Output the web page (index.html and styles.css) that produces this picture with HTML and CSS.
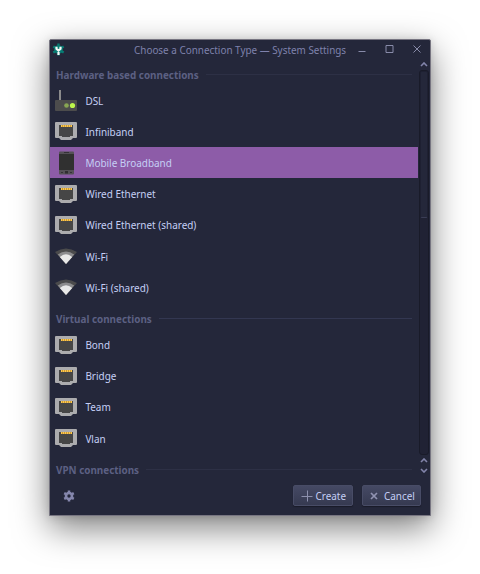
FILE: index.html
```html
<!DOCTYPE html>
<html lang="en">
<head>
<meta charset="utf-8">
<title>Choose a Connection Type — System Settings</title>
<link rel="stylesheet" href="styles.css">
</head>
<body>
<svg class="defs" aria-hidden="true">
  <symbol id="icon-port" viewBox="0 0 22 20">
    <path d="M1 1H21Q22 1 22 2V16Q22 17 21 17H18L16 19H6L4 17H1Q0 17 0 16V2Q0 1 1 1Z" fill="#acacae"/>
    <path d="M4 4H18V15H15V16H7V15H4Z" fill="#464646"/>
    <path d="M6 4H17V6H6Z" fill="#c99a3b"/>
    <path d="M6.500 4v2M8.500 4v2M10.500 4v2M12.500 4v2M14.500 4v2M16.500 4v2" stroke="#ffc94a"/>
  </symbol>
  <symbol id="icon-dsl" viewBox="0 0 22 22">
    <path d="M4 1h2v11H4z" fill="#8b8b8c"/>
    <rect y="11" width="22" height="11" rx="1" fill="#4c4c4c"/>
    <circle cx="11.5" cy="16.5" r="2.3" fill="#88a653"/>
    <circle cx="17.5" cy="16.5" r="2.6" fill="#bdf64b"/>
  </symbol>
  <symbol id="icon-phone" viewBox="0 0 22 24">
    <rect x="4" y="0.5" width="15" height="23" rx="1" fill="#555157"/>
    <path d="M4 3h15v16H4z" fill="#303030"/>
    <path d="M9 1.5h5M6 21.5h2M15 21.5h2" stroke="#343136"/>
    <rect x="10" y="20" width="3" height="2.5" fill="#302e31"/>
  </symbol>
  <symbol id="icon-wifi" viewBox="0 0 22 16">
    <path d="M0 4Q11-3 22 4L11 16z" fill="#4b4b4c"/>
    <path d="M2.8 6.5Q11 .3 19.2 6.5L11 16z" fill="#8c8c8e"/>
    <path d="M4.8 9Q11 3.5 17.2 9L11 16z" fill="#e9e9e9"/>
  </symbol>
</svg>
<main class="window">
  <header class="titlebar">
    <svg class="app-icon" viewBox="0 0 13 13">
      <circle cx="6.5" cy="6.5" r="4.3" fill="#087d74"/>
      <path d="M6.5.5v12M1.3 3.5l10.4 6M1.3 9.5l10.4-6" stroke="#087d74" stroke-width="2.4"/>
      <path d="M4.5 3.800v2l2 1.700 2-1.700V3.800M6.500 6.500V12" fill="none" stroke="#f7faf9" stroke-width="2.200"/>
    </svg>
    <h1 class="title">Choose a Connection Type — System Settings</h1>
    <svg class="controls" viewBox="0 0 64 12"><path d="M.5 8.5h7M28 2.5h7v7h-7zM55.500 2.500l7 7M62.500 2.500l-7 7" fill="none" stroke="#9496b5" stroke-width=".9"/></svg>
  </header>
  <div class="content">
    <div class="list">
      <h2 class="heading first"><span>Hardware based connections</span></h2>
      <div class="row"><svg class="dsl"><use href="#icon-dsl"/></svg><span>DSL</span></div>
      <div class="row"><svg class="port"><use href="#icon-port"/></svg><span>Infiniband</span></div>
      <div class="row selected"><svg class="phone"><use href="#icon-phone"/></svg><span>Mobile Broadband</span></div>
      <div class="row"><svg class="port"><use href="#icon-port"/></svg><span>Wired Ethernet</span></div>
      <div class="row"><svg class="port"><use href="#icon-port"/></svg><span>Wired Ethernet (shared)</span></div>
      <div class="row"><svg class="wifi"><use href="#icon-wifi"/></svg><span>Wi-Fi</span></div>
      <div class="row"><svg class="wifi"><use href="#icon-wifi"/></svg><span>Wi-Fi (shared)</span></div>
      <h2 class="heading bright"><span>Virtual connections</span></h2>
      <div class="row"><svg class="port"><use href="#icon-port"/></svg><span>Bond</span></div>
      <div class="row"><svg class="port"><use href="#icon-port"/></svg><span>Bridge</span></div>
      <div class="row"><svg class="port"><use href="#icon-port"/></svg><span>Team</span></div>
      <div class="row"><svg class="port"><use href="#icon-port"/></svg><span>Vlan</span></div>
      <h2 class="heading last"><span>VPN connections</span></h2>
    </div>
    <div class="scrollbar">
      <svg class="arrow" viewBox="0 0 8 5"><path d="M1 4l3-3 3 3"/></svg>
      <div class="groove"><div class="thumb"></div></div>
      <svg class="arrow" viewBox="0 0 8 5"><path d="M1 4l3-3 3 3"/></svg>
      <svg class="arrow" viewBox="0 0 8 5"><path d="M1 1l3 3 3-3"/></svg>
    </div>
  </div>
  <footer class="footer">
    <svg class="gear" viewBox="0 0 12 12"><g fill="none" stroke="#8587ad"><circle cx="6" cy="6" r="3" stroke-width="2.6"/><path d="M6 .5v2M6 9.500v2M1.200 3.200l1.800 1M9 7.800l1.800 1M1.200 8.800l1.800-1M9 4.200l1.800-1" stroke-width="2.5"/></g></svg>
    <button class="button create"><svg viewBox="0 0 12 12"><path d="M6.5 .5v11M.5 6.5h11" stroke="#8d90ad"/></svg><span>Create</span></button>
    <button class="button cancel"><svg viewBox="0 0 8 8"><path d="M1 1l6 6M7 1L1 7" stroke="#9193b2" stroke-width="1.7"/></svg><span>Cancel</span></button>
  </footer>
</main>
</body>
</html>
```
FILE: styles.css
```css
* { box-sizing: border-box; }
body { margin: 0; width: 480px; height: 574px; padding: 39px 0 0 49px; overflow: hidden; background: #fff; font: 9.95px/14px "Noto Sans", sans-serif; color: #c5cff5; }
.defs { position: absolute; width: 0; height: 0; }
svg { display: block; flex: none; }
.window { width: 382px; height: 477px; display: flex; flex-direction: column; border: 1px solid #777581; border-radius: 2px 2px 0 0; background: #24273a; box-shadow: 0 12px 34px rgba(0,0,0,.5), 0 1px 8px rgba(0,0,0,.13); }
.titlebar { height: 20px; display: flex; align-items: center; padding: 0 8px 0 2px; }
.app-icon { width: 13px; height: 13px; margin-top: -1px; }
.title { margin: 0 0 0 69px; width: 224.5px; font-size: 9.92px; font-weight: 400; color: #7f82ac; white-space: nowrap; }
.controls { width: 64px; height: 12px; margin-top: -2px; }
.content { height: 418px; display: flex; }
.list { width: 368px; overflow: hidden; }
.heading { display: flex; align-items: center; gap: 7px; height: 26px; margin: 0; padding: 6px 6px 0 6px; font-size: 9.9px; font-weight: 700; color: #5c6083; white-space: nowrap; }
.heading.first { height: 24.6px; padding-top: 5px; }
.heading.last { height: 24px; padding-top: 8px; }
.heading::after { content: ""; flex: 1; height: 1px; background: #2d3045; }
.heading.bright::after { background: #333751; }
.row { height: 31.2px; display: flex; align-items: center; gap: 8.4px; padding-left: 5px; }
.row span { padding-top: 1px; white-space: nowrap; }
.selected { background: #8d5ca8; }
.dsl { width: 22px; height: 22px; }
.port { width: 22px; height: 20px; }
.phone { width: 22px; height: 24px; }
.wifi { width: 22px; height: 16px; }
.scrollbar { width: 12px; padding: 2px 1px 0 1px; display: flex; flex-direction: column; align-items: center; }
.arrow { width: 8px; height: 5px; margin-bottom: 5px; }
.arrow path { fill: none; stroke: #8284aa; stroke-width: 1.6; }
.groove { width: 10px; height: 385px; flex: none; margin: -2px 0 3px; border: 1px solid #191b29; border-radius: 3px; background: #202234; }
.thumb { width: 8px; height: 147px; border: 1px solid #1e2032; border-bottom-color: #3a3d55; border-radius: 2px; background: #24273a; }
.footer { height: 37px; display: flex; align-items: center; padding: 0 9px 2px 13px; }
.gear { width: 12px; height: 12px; margin-right: auto; }
.button { height: 21px; border: 1px solid #484c66; border-radius: 2px; background: linear-gradient(#454964, #363a51); box-shadow: 0 1px 1px #191b29; color: #c5cff5; font: inherit; display: flex; align-items: center; padding: 0; white-space: nowrap; }
.create { width: 60px; padding-left: 7px; gap: 2.5px; margin-right: 9px; }
.create svg { width: 12px; height: 12px; }
.cancel { width: 59px; padding-left: 7px; gap: 6px; }
.cancel svg { width: 8px; height: 8px; }
```
